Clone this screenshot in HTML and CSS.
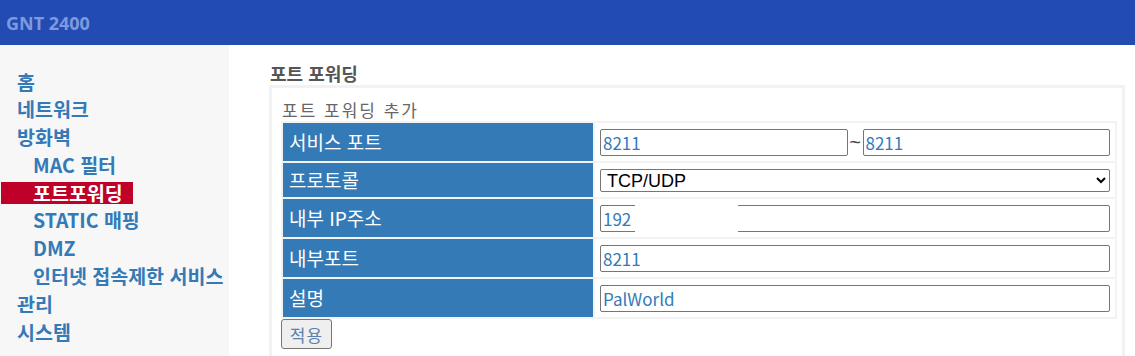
FILE: index.html
```html
<!DOCTYPE html>
<html lang="ko">
<head>
<meta charset="utf-8">
<title>GNT 2400</title>
<link rel="stylesheet" href="styles.css">
</head>
<body>
<header class="topbar"><span class="brand">GNT 2400</span></header>
<div class="layout">
  <nav class="sidebar">
    <ul class="menu">
      <li class="menu-item"><a class="menu-link">홈</a></li>
      <li class="menu-item"><a class="menu-link">네트워크</a></li>
      <li class="menu-item"><a class="menu-link">방화벽</a></li>
      <li class="menu-item sub"><a class="menu-link">MAC 필터</a></li>
      <li class="menu-item sub active"><a class="menu-link">포트포워딩</a></li>
      <li class="menu-item sub"><a class="menu-link">STATIC 매핑</a></li>
      <li class="menu-item sub"><a class="menu-link">DMZ</a></li>
      <li class="menu-item sub"><a class="menu-link">인터넷 접속제한 서비스</a></li>
      <li class="menu-item"><a class="menu-link">관리</a></li>
      <li class="menu-item"><a class="menu-link">시스템</a></li>
    </ul>
  </nav>
  <main class="content">
    <h2 class="page-title">포트 포워딩</h2>
    <section class="panel">
      <div class="panel-title">포트 포워딩 추가</div>
      <table class="form-table">
        <tr class="row">
          <th class="label">서비스 포트</th>
          <td class="field"><div class="range"><input class="text-input" value="8211"><span class="tilde">~</span><input class="text-input" value="8211"></div></td>
        </tr>
        <tr class="row row-select">
          <th class="label">프로토콜</th>
          <td class="field"><select class="select-input"><option>TCP/UDP</option><option>TCP</option><option>UDP</option></select></td>
        </tr>
        <tr class="row">
          <th class="label">내부 IP주소</th>
          <td class="field redacted"><input class="text-input" value="192"><span class="redact"></span></td>
        </tr>
        <tr class="row">
          <th class="label">내부포트</th>
          <td class="field"><input class="text-input" value="8211"></td>
        </tr>
        <tr class="row">
          <th class="label">설명</th>
          <td class="field"><input class="text-input" value="PalWorld"></td>
        </tr>
      </table>
      <button class="btn">적용</button>
    </section>
  </main>
</div>
</body>
</html>
```

FILE: styles.css
```css
html, body {
  margin: 0;
  padding: 0;
}
body {
  font-family: "Noto Sans CJK KR", "Noto Sans", sans-serif;
  background: #ffffff;
  height: 356px;
  overflow: hidden;
}
.topbar {
  height: 45px;
  background: #234cb2;
  display: flex;
  align-items: center;
  padding-left: 6px;
}
.brand {
  color: #7d9ade;
  font-family: "Noto Sans", sans-serif;
  font-weight: 700;
  font-size: 18px;
  line-height: 20px;
  margin-top: 1px;
}
.layout {
  display: flex;
  min-height: calc(100vh - 45px);
}
.sidebar {
  width: 229px;
  flex: none;
  background: #f7f7f7;
}
.menu {
  list-style: none;
  margin: 0;
  padding: 25.5px 0 0 0;
  display: flex;
  flex-direction: column;
  gap: 5.8px;
}
.menu-item {
  margin: 0;
}
.menu-link {
  display: block;
  height: 22px;
  line-height: 22px;
  padding-left: 17px;
  font-size: 19.5px;
  font-weight: 700;
  color: #337ab7;
  white-space: nowrap;
}
.menu-item.sub .menu-link {
  padding-left: 33px;
}
.menu-item.active .menu-link {
  background: #bf0028;
  color: #ffffff;
  width: 100px;
  margin-left: 1px;
  padding-left: 32px;
}
.content {
  flex: 1;
  padding: 18px 10px 0 40px;
}
.page-title {
  margin: 0 0 2px 1px;
  font-size: 18px;
  line-height: 20px;
  font-weight: 700;
  color: #555555;
}
.panel {
  border: 3px solid #f2f2f2;
  border-bottom: none;
  padding: 11px 5px 20px 9px;
}
.panel-title {
  padding-left: 1px;
  font-size: 17px;
  line-height: 22px;
  color: #666666;
  letter-spacing: 2px;
}
.form-table {
  width: 100%;
  border-collapse: separate;
  border-spacing: 2px;
  background: #f3f3f3;
}
.row {
  height: 38px;
}
.row-select {
  height: 34px;
}
.label {
  width: 310px;
  box-sizing: border-box;
  background: #337ab7;
  color: #ffffff;
  font-size: 19px;
  line-height: 20px;
  font-weight: 400;
  text-align: left;
  padding: 0 0 0 6px;
  vertical-align: middle;
}
.field {
  background: #ffffff;
  padding: 0 5px 0 5px;
  vertical-align: middle;
  line-height: 20px;
}
.redacted {
  position: relative;
}
.redact {
  position: absolute;
  left: 40px;
  top: 2px;
  width: 103px;
  height: 34px;
  background: #ffffff;
}
.range {
  display: flex;
  align-items: center;
}
.range .text-input {
  flex: 1;
  min-width: 0;
}
.tilde {
  width: 15px;
  text-align: center;
  font-family: "Liberation Sans", Arial, sans-serif;
  font-size: 20px;
  color: #444444;
}
.text-input {
  display: block;
  width: 100%;
  box-sizing: border-box;
  height: 27px;
  margin: 0;
  border: 1px solid #767676;
  border-radius: 2px;
  padding: 0 2px;
  font-family: "Noto Sans CJK KR", "Noto Sans", sans-serif;
  font-size: 17px;
  color: #337ab7;
  background: #ffffff;
}
.select-input {
  display: block;
  width: 100%;
  box-sizing: border-box;
  height: 23px;
  margin: 0;
  border: 1px solid #767676;
  border-radius: 2px;
  padding: 0 2px;
  font-family: "Liberation Sans", Arial, sans-serif;
  font-size: 18px;
  color: #000000;
  background: #ffffff;
}
.btn {
  display: block;
  width: 51px;
  height: 30px;
  margin: 0;
  padding: 0;
  border: 1px solid #767676;
  border-radius: 3px;
  background: #efefef;
  font-family: "Noto Sans CJK KR", "Noto Sans", sans-serif;
  font-size: 17px;
  color: #5a7fae;
  letter-spacing: 1px;
}
```
